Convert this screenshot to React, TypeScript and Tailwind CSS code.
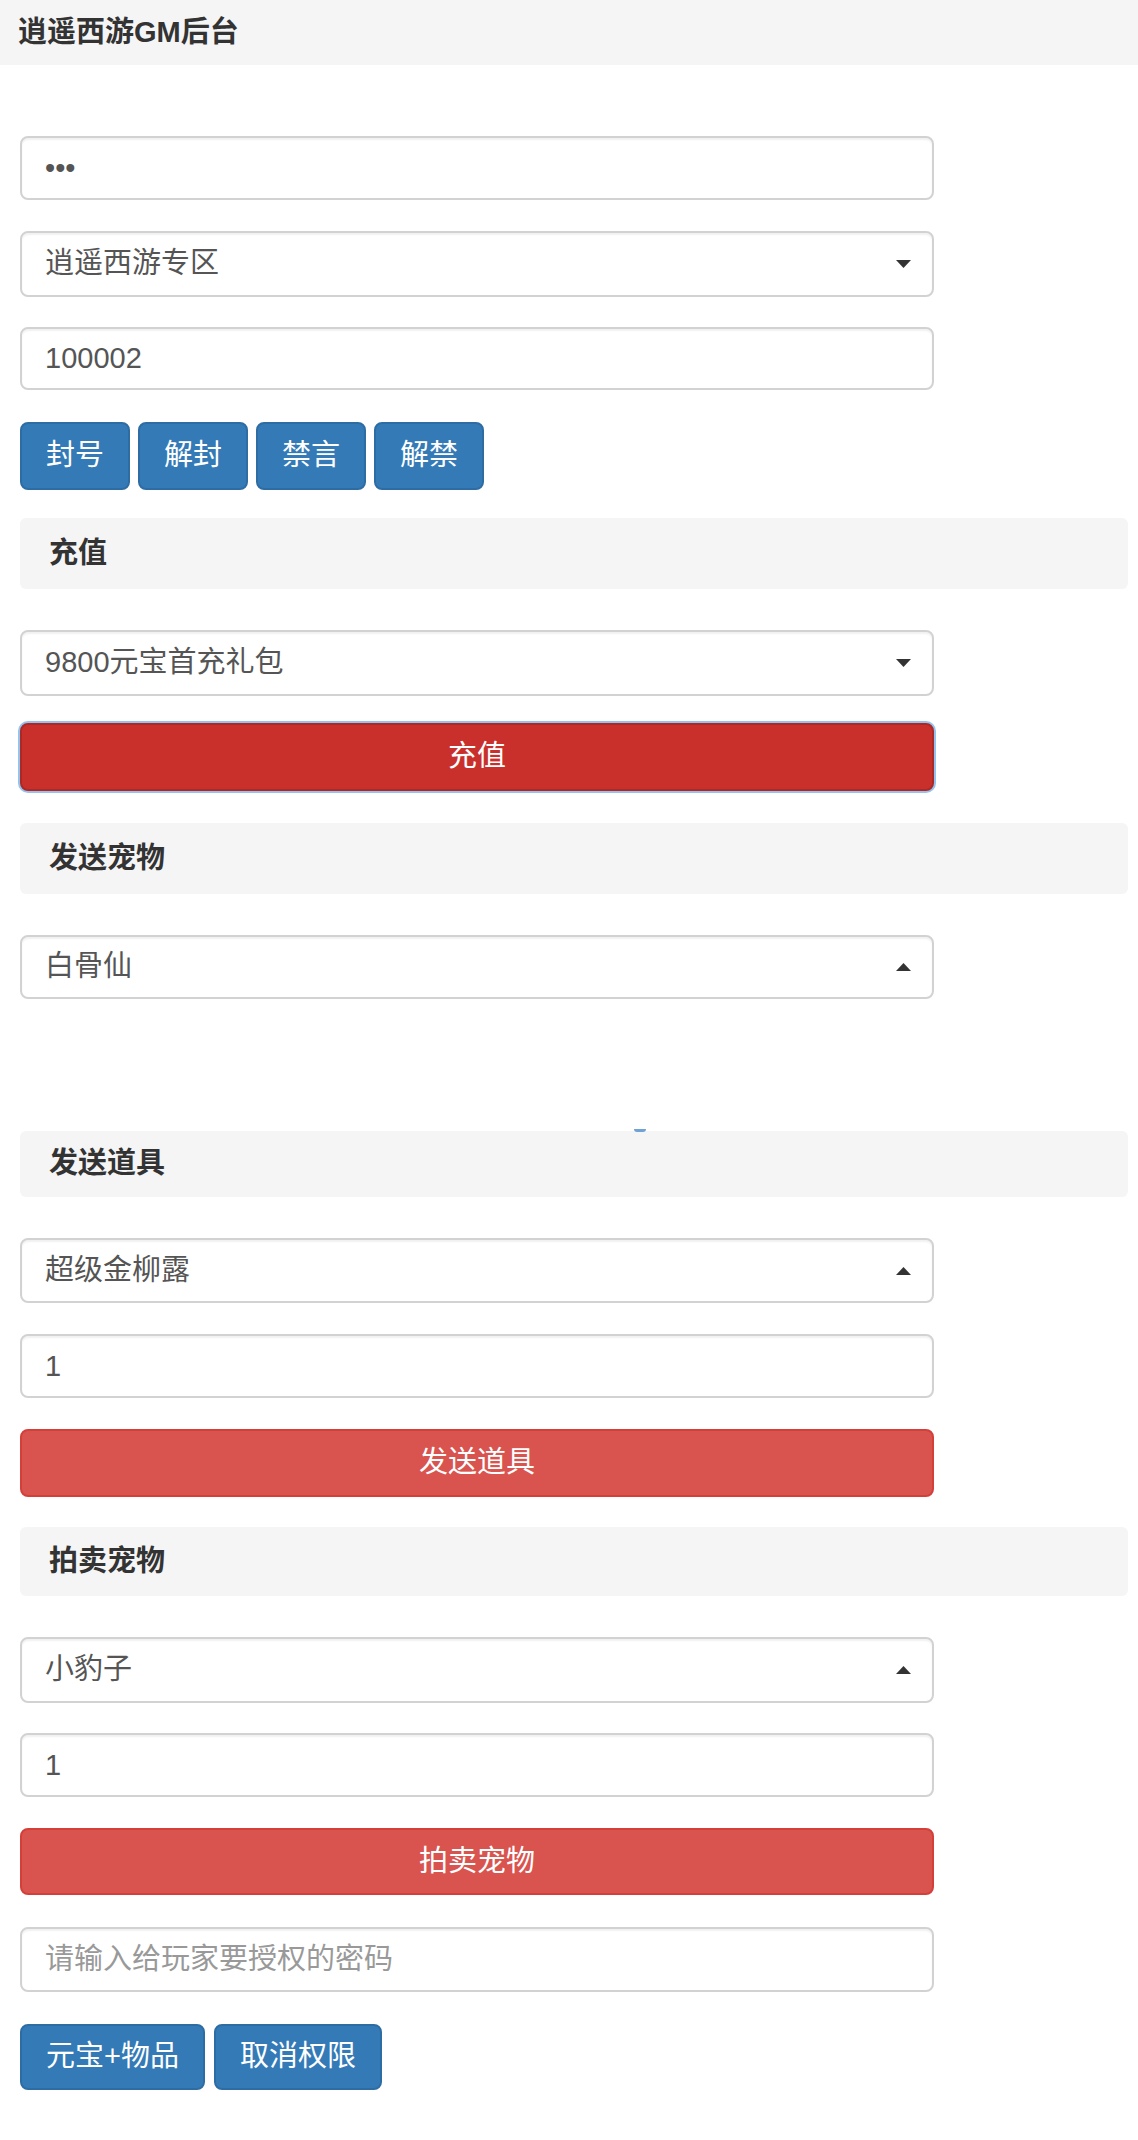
import React from "react";

const font = {
  fontFamily: '"Liberation Sans", "Noto Sans CJK SC", Arial, sans-serif',
};

const Caret = ({ up }: { up?: boolean }) => (
  <svg width="15" height="8" viewBox="0 0 15 8" className="shrink-0">
    {up ? <polygon points="0,8 15,8 7.5,0" fill="#333" /> : <polygon points="0,0 15,0 7.5,8" fill="#333" />}
  </svg>
);

const TextInput = ({
  value,
  placeholder,
  type = "text",
  className = "",
}: {
  value?: string;
  placeholder?: string;
  type?: string;
  className?: string;
}) => (
  <input
    type={type}
    readOnly
    defaultValue={value}
    placeholder={placeholder}
    style={font}
    className={`block w-[914px] rounded-[8px] border-2 border-[#d2d2d2] bg-white px-[23px] text-[29px] text-[#555] placeholder:text-[#999] shadow-[inset_0_2px_2px_rgba(0,0,0,0.06)] outline-none ${className}`}
  />
);

const SelectBox = ({ label, up, className = "" }: { label: string; up?: boolean; className?: string }) => (
  <div
    className={`flex w-[914px] items-center justify-between rounded-[8px] border-2 border-[#d2d2d2] bg-white pl-[23px] pr-[21px] text-[29px] text-[#555] shadow-[inset_0_2px_2px_rgba(0,0,0,0.06)] ${className}`}
  >
    <span>{label}</span>
    <Caret up={up} />
  </div>
);

const SectionTitle = ({ title, className = "" }: { title: string; className?: string }) => (
  <div className={`flex w-[1108px] items-center rounded-[6px] bg-[#f5f5f5] pl-[29px] text-[29px] font-bold text-[#333] ${className}`}>
    {title}
  </div>
);

const BlueButton = ({ children }: { children: React.ReactNode }) => (
  <button
    style={font}
    className="h-full rounded-[8px] border-2 border-[#2e6da4] bg-[#337ab7] px-[24px] text-[29px] text-white"
  >
    {children}
  </button>
);

const RedButton = ({ children, focused, className = "" }: { children: React.ReactNode; focused?: boolean; className?: string }) => (
  <button
    style={font}
    className={`block w-[914px] rounded-[8px] border-2 text-[29px] text-white ${
      focused
        ? "border-[#ac2925] bg-[#c9302c] shadow-[0_0_0_2px_#93c3ee]"
        : "border-[#d43f3a] bg-[#d9534f]"
    } ${className}`}
  >
    {children}
  </button>
);

export default function App() {
  return (
    <div style={font} className="min-h-[2140px] w-[1138px] bg-white text-[#333]">
      <div className="flex h-[65px] items-center bg-[#f5f5f5] pl-[18px] text-[29px] font-bold text-[#333]">
        逍遥西游GM后台
      </div>

      <div className="pl-[20px] pt-[71px] pb-[50px]">
        <TextInput type="password" value="123" className="h-[64px] mb-[31px]" />
        <SelectBox label="逍遥西游专区" className="h-[66px] mb-[30px]" />
        <TextInput value="100002" className="h-[63px] mb-[32px]" />

        <div className="mb-[28px] flex h-[68px] gap-[8px]">
          <BlueButton>封号</BlueButton>
          <BlueButton>解封</BlueButton>
          <BlueButton>禁言</BlueButton>
          <BlueButton>解禁</BlueButton>
        </div>

        <SectionTitle title="充值" className="h-[71px] mb-[41px]" />
        <SelectBox label="9800元宝首充礼包" className="h-[66px] mb-[27px]" />
        <RedButton focused className="h-[68px] mb-[32px]">
          充值
        </RedButton>

        <SectionTitle title="发送宠物" className="h-[71px] mb-[41px]" />
        <SelectBox label="白骨仙" up className="h-[64px] mb-[132px]" />

        <div className="relative mb-[41px]">
          <div className="absolute left-[614px] top-[-2px] h-[3px] w-[12px] rounded-b-full bg-[#6fa3d6]" />
          <SectionTitle title="发送道具" className="h-[66px]" />
        </div>
        <SelectBox label="超级金柳露" up className="h-[65px] mb-[31px]" />
        <TextInput value="1" className="h-[64px] mb-[31px]" />
        <RedButton className="h-[68px] mb-[30px]">发送道具</RedButton>

        <SectionTitle title="拍卖宠物" className="h-[69px] mb-[41px]" />
        <SelectBox label="小豹子" up className="h-[66px] mb-[30px]" />
        <TextInput value="1" className="h-[64px] mb-[31px]" />
        <RedButton className="h-[67px] mb-[32px]">拍卖宠物</RedButton>

        <TextInput placeholder="请输入给玩家要授权的密码" className="h-[65px] mb-[32px]" />
        <div className="flex h-[66px] gap-[9px]">
          <BlueButton>元宝+物品</BlueButton>
          <BlueButton>取消权限</BlueButton>
        </div>
      </div>
    </div>
  );
}
